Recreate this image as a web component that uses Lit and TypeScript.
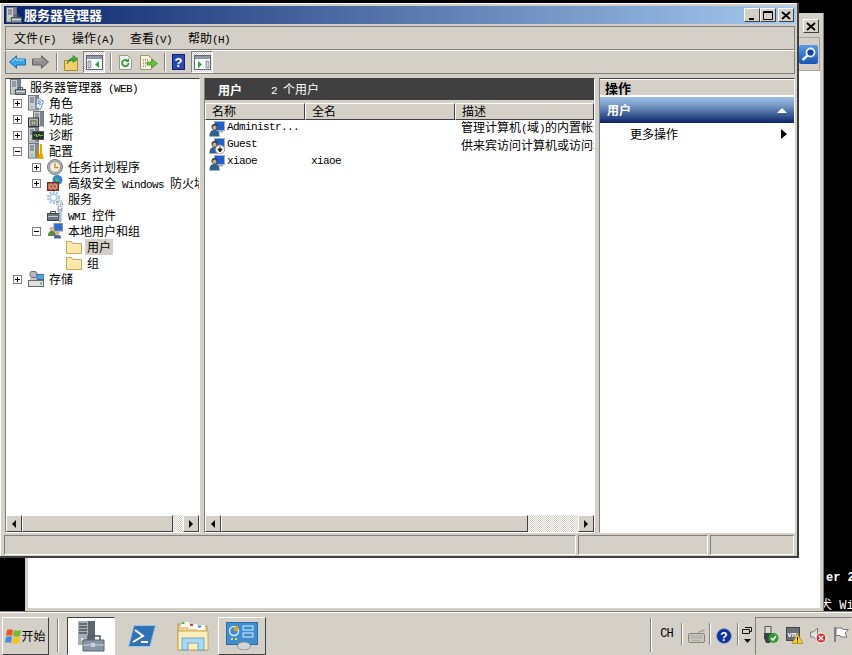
import { LitElement, css, html, svg, TemplateResult } from "lit";
import { customElement } from "lit/decorators.js";

// small helper so every icon below is one line of shapes
const ic = (w: number, h: number, body: unknown, vb = `0 0 ${w} ${h}`) =>
  html`<svg class="ic" width=${w} height=${h} viewBox=${vb}>${body}</svg>`;

const tower = svg`
  <rect x="0.500" y="0.500" width="10" height="14.500" fill="#c9ced4" stroke="#6f7780"/>
  <rect x="7" y="1" width="3" height="13.500" fill="#7d858e"/>
  <path d="M2 3h4M2 5h4M2 7h4" stroke="#5d656e"/>
  <rect x="3" y="11" width="2" height="2" fill="#8fd06a"/>`;

const toolbox = svg`
  <rect x="5.500" y="10.500" width="10" height="5" fill="#8b98a6" stroke="#4a5560"/>
  <path d="M8.500 10.500V8.500h4v2" fill="none" stroke="#4a5560"/>
  <path d="M6 12.500h9" stroke="#d7dde3"/>`;

const person = svg`
  <circle cx="5.500" cy="6" r="3" fill="#2f3a3c"/>
  <circle cx="5.500" cy="6.700" r="2.100" fill="#d6a67c"/>
  <path d="M.5 15.500c0-4.500 1.500-6.500 5-6.500s5 2 5 6.500z" fill="#33618f"/>`;

const icons: Record<string, () => TemplateResult> = {
  root: () => ic(16, 16, svg`${tower}${toolbox}`),
  roles: () =>
    ic(16, 16, svg`${tower}
      <path d="M9 3l6.500 3-3 8.500-4.500-2z" fill="#dfe9f5" stroke="#7a95b8"/>
      <path d="M10 6l3 1.500M9.500 8l3 1.500" stroke="#4f78ad"/>`),
  features: () =>
    ic(16, 16, svg`<g transform="translate(5 0)">${tower}</g>
      <rect x=".5" y="7" width="10" height="8.500" fill="#b9b9a8" stroke="#333"/>
      <rect x="3" y="10" width="5" height="4" fill="#e8e8e0" stroke="#444"/>
      <circle cx="5.500" cy="12" r="1" fill="#4c8a3c"/>`),
  diag: () =>
    ic(16, 16, svg`${tower}
      <rect x="4.500" y="4.500" width="11.500" height="8" fill="#26302a" stroke="#555"/>
      <path d="M6 9l2-2 1 3 2-3 1 2 3-1" fill="none" stroke="#7fd05a"/>`),
  config: () =>
    ic(16, 16, svg`${tower}
      <path d="M13 1v8M13 9l-1.500 6h3z" stroke="#e0a800" stroke-width="2" fill="#e0a800"/>
      <path d="M8.500 1l2.500 3-1 1-2.500-3z" fill="#8a8f96"/>
      <rect x="9" y="5" width="2" height="10" fill="#d08c00"/>`),
  clock: () =>
    ic(16, 16, svg`
      <circle cx="8" cy="8" r="7.500" fill="#b7bcc2" stroke="#6f767d"/>
      <circle cx="8" cy="8" r="5.500" fill="#f6f1dc" stroke="#8b8f94"/>
      <path d="M8 4v4.500h3.500" fill="none" stroke="#c88a20" stroke-width="1.300"/>`),
  firewall: () =>
    ic(16, 16, svg`
      <circle cx="10.500" cy="5" r="5" fill="#2f7fd6"/>
      <path d="M8 2.500l3 .5 1 2.500-3 1.500zM13 7l2-1-1 3z" fill="#5cb84a"/>
      <rect x="0.500" y="7.500" width="11" height="8" fill="#a8452a" stroke="#6e2a18"/>
      <path d="M1 10h10M1 13h10M4 8v2M8 8v2M2.500 10v3M6 10v3M9.500 10v3M4 13v2M8 13v2" stroke="#e3c0ac" stroke-width=".8"/>`),
  gears: () =>
    ic(16, 16, svg`
      <circle cx="6.500" cy="6.500" r="5.500" fill="none" stroke="#9dbcdc" stroke-width="2" stroke-dasharray="2 1.500"/>
      <circle cx="6.500" cy="6.500" r="3.500" fill="#fff" stroke="#b4cce4" stroke-width="1.800"/>
      <circle cx="12.500" cy="12.500" r="3" fill="none" stroke="#8f99a4" stroke-width="1.200" stroke-dasharray="1.500 1"/>
      <circle cx="12.500" cy="12.500" r="1.500" fill="#fff" stroke="#a8b2bc"/>`),
  wmi: () =>
    ic(16, 16, svg`
      <rect x="0.500" y="6.500" width="11" height="7" fill="#6d7680" stroke="#3c434a"/>
      <path d="M3.500 6.500V4.500h5v2" fill="none" stroke="#3c434a"/>
      <path d="M1 9.500h10" stroke="#c4cbd2"/>
      <path d="M11 .5l2 3 2-3v4l-1 1v8l-1 2-1-2v-8l-1-1z" fill="#c8d2de" stroke="#6c87a8" stroke-width=".7"/>`),
  localusers: () =>
    ic(16, 16, svg`
      <rect x="7" y="0.500" width="8.500" height="7.500" fill="#2d6fd0" stroke="#8c9098"/>
      <circle cx="5" cy="6" r="2.400" fill="#e2b48c"/>
      <path d="M1 13c0-4 1.500-5 4-5s4 1 4 5z" fill="#5d8a4c"/>
      <circle cx="10.500" cy="10" r="2" fill="#d9a97f"/>
      <path d="M7 15.500c0-3 1-3.500 3.500-3.500s3.500.5 3.500 3.500z" fill="#44689e"/>`),
  folder: () =>
    ic(16, 14, svg`
      <path d="M0.500 13.500V1.500h5l1 2h9v10z" fill="#fbe7a6" stroke="#c9a956"/>
      <path d="M1.500 5h13" stroke="#fff6d4"/>`),
  storage: () =>
    ic(16, 16, svg`
      <rect x="2" y="0.500" width="7" height="6" rx="2" fill="#b4bac0" stroke="#6a7077"/>
      <rect x="9" y="3.500" width="7" height="5" fill="#5ba3dc" stroke="#2e6aa0"/>
      <rect x="0.500" y="9.500" width="15" height="6" fill="#dfe2e5" stroke="#646a70"/>
      <rect x="12" y="11.500" width="2" height="2" fill="#5dbb3f"/>
      <path d="M2 8h8" stroke="#8a9097"/>`),
  user: () =>
    ic(16, 16, svg`
      <rect x="5.500" y="0.500" width="10" height="9" fill="#1f5fd0" stroke="#a4adb8"/>
      <path d="M9 10h5v1.500H9z" fill="#a4adb8"/>
      ${person}`),
  guest: () =>
    ic(16, 16, svg`
      <rect x="5.500" y="0.500" width="10" height="9" fill="#1f5fd0" stroke="#a4adb8"/>
      ${person}
      <circle cx="11" cy="11.500" r="4.500" fill="#fff" stroke="#8a8f94"/>
      <path d="M11 8.500v3M8.800 11h4.400L11 14z" stroke="#222" fill="#222"/>`),
  back: () =>
    ic(17, 14, svg`
      <path d="M0.500 7L7.500.8V4h9v6h-9v3.200z" fill="#39a3ea" stroke="#1c6fb8"/>
      <path d="M3 7l4-3.500V5h8" fill="none" stroke="#a5dcfa"/>`),
  forward: () =>
    ic(17, 14, svg`
      <path d="M16.500 7L9.500.8V4h-9v6h9v3.200z" fill="#8e8e8e" stroke="#5e5e5e"/>
      <path d="M1.500 5h8V3.500" fill="none" stroke="#bdbdbd"/>`),
  upfolder: () =>
    ic(15, 17, svg`
      <path d="M.5 16.500V6.500h13v10z" fill="#f0cf70" stroke="#a98a35"/>
      <path d="M3 10c1-4 3-6 6-6V1.500L14 5l-5 3.500V6c-2 0-4 1-6 4z" fill="#3fae3a" stroke="#23781f" stroke-width=".6"/>`),
  showtree: () =>
    ic(17, 15, svg`
      <rect x=".5" y=".5" width="16" height="14" fill="#fff" stroke="#667"/>
      <rect x="1" y="1" width="15" height="3" fill="#8a98a8"/>
      <path d="M2 6h3v7H2z" fill="#c3d2e2" stroke="#667" stroke-width=".6"/>
      <path d="M13 6l-4 3.500 4 3.500z" fill="#2fa03a"/>`),
  refresh: () =>
    ic(13, 15, svg`
      <path d="M.5.5h8l4 4v10H.5z" fill="#f4f4ee" stroke="#9a9a8e"/>
      <path d="M9.500 8a3.200 3.200 0 1 1-1-2.300" fill="none" stroke="#2fa03a" stroke-width="1.800"/>
      <path d="M10 3v4H6.500z" fill="#2fa03a"/>`),
  exportl: () =>
    ic(18, 15, svg`
      <path d="M.5.5h8l3 3v11H.5z" fill="#f7f2d8" stroke="#9c9474"/>
      <path d="M3 5h5M3 8h3M3 11h3" stroke="#555" stroke-dasharray="1 1"/>
      <path d="M7 7h5V4l5.500 4.500L12 13v-3H7z" fill="#62c03c" stroke="#3b8a22" stroke-width=".6"/>`),
  help: () =>
    ic(13, 16, svg`
      <rect x=".5" y=".5" width="12" height="15" fill="#2848b8" stroke="#12236e"/>
      <text x="6.500" y="13" font-family="Liberation Sans" font-weight="700" font-size="13" fill="#fff" text-anchor="middle">?</text>`),
  showaction: () =>
    ic(17, 15, svg`
      <rect x=".5" y=".5" width="16" height="14" fill="#fff" stroke="#667"/>
      <rect x="1" y="1" width="15" height="3" fill="#8a98a8"/>
      <path d="M12 6h3v7h-3z" fill="#c3d2e2" stroke="#667" stroke-width=".6"/>
      <path d="M4 6l4 3.500L4 13z" fill="#2fa03a"/>`),
  winlogo: () =>
    ic(16, 15, svg`
      <path d="M2 1c2-1 4-1 6 0L7 7C5 6 3 6 1 7z" fill="#e8562a"/>
      <path d="M9 1c2 1 4 1 7 0l-1 6c-2 1-5 1-7 0z" fill="#7cb83a"/>
      <path d="M1 8c2-1 4-1 6 0l-1 6c-2-1-4-1-6 0z" fill="#3f8fdc"/>
      <path d="M8 8c2 1 5 1 7 0l-1 6c-3 1-5 1-7 0z" fill="#f6c21c"/>`),
  bigserver: () =>
    ic(28, 32, svg`
      <rect x="1" y="1" width="14" height="24" fill="#a8aeb5"/>
      <rect x="11" y="1" width="7" height="24" fill="#5f666e"/>
      <path d="M2 4h8M2 7h8M2 10h8M2 13h8" stroke="#4e555c" stroke-width="1.300"/>
      <rect x="4" y="18" width="3" height="3" fill="#d8dde2"/>
      <path d="M6 20h21v11H6z" fill="#8696a6" stroke="#59656f"/>
      <path d="M11 20v-4h12v4" fill="none" stroke="#4f5a64" stroke-width="1.500"/>
      <path d="M6 25h21" stroke="#d0d7de"/>
      <rect x="14" y="23" width="4" height="4" fill="#c8d0d8"/>`),
  ps: () =>
    ic(28, 22, svg`
      <path d="M6 .5h21.500L22 21.500H.5z" fill="#2f73b6" stroke="#9cc4e4"/>
      <path d="M7 5l8 6-10 6" fill="none" stroke="#fff" stroke-width="2"/>
      <path d="M13 17h7" stroke="#fff" stroke-width="2"/>`),
  explorer: () =>
    ic(32, 30, svg`
      <path d="M1 29V3h11l2 2h16v24z" fill="#ead08c" stroke="#b09550"/>
      <rect x="4" y="1" width="8" height="5" fill="#fff"/><rect x="4.500" y="1" width="3" height="2" fill="#3ec43e"/>
      <rect x="12" y="3" width="8" height="5" fill="#fff"/><rect x="13" y="3" width="3" height="2" fill="#d8402a"/>
      <rect x="20" y="4" width="8" height="5" fill="#fff"/><rect x="21" y="4.500" width="3" height="2" fill="#2f86d8"/>
      <path d="M1 29V10h30v19z" fill="#fbeeb8" stroke="#c4a860"/>
      <path d="M5 29V17h22v12h-6V22H11v7z" fill="#a8d8f4" stroke="#6aa8d0"/>`),
  dash: () =>
    ic(32, 28, svg`
      <rect x=".5" y=".5" width="31" height="22" fill="#3f8fd0" stroke="#2a6aa4"/>
      <circle cx="8" cy="9" r="4.500" fill="none" stroke="#d8ecfa" stroke-width="1.400"/>
      <path d="M8 5l4-1v5H8z" fill="#f09a20"/>
      <rect x="17" y="4" width="10" height="4" fill="none" stroke="#d8ecfa"/>
      <rect x="17" y="11" width="10" height="4" fill="none" stroke="#d8ecfa"/>
      <path d="M5 16h2v2H5zM9 16h2v2H9z" fill="#f6d24a"/>
      <ellipse cx="18" cy="24" rx="6.500" ry="4" fill="#d4d6d8" stroke="#8c9096"/>`),
  keyboard: () =>
    ic(17, 14, svg`
      <path d="M11 4c0-2 1-2 3-2s2-1 2-2" fill="none" stroke="#8a8a84"/>
      <rect x=".5" y="4.500" width="16" height="9" rx="1.500" fill="#c9c6bc" stroke="#85847d"/>
      <path d="M2.500 7h12M2.500 9h12M4.500 11.500h8" stroke="#8e8d86" stroke-dasharray="1 1"/>`),
  helpround: () =>
    ic(16, 16, svg`
      <circle cx="8" cy="8" r="7.500" fill="#10309c" stroke="#9aa6c4"/>
      <text x="8" y="12.500" font-family="Liberation Sans" font-weight="700" font-size="12" fill="#fff" text-anchor="middle">?</text>`),
  restore: () =>
    ic(10, 7, svg`<path d="M3 .5h6.500v4H7.500M.5 2.500h7v4h-7z" fill="#d4d0c8" stroke="#111"/>`),
  smalldown: () => ic(7, 4, svg`<path d="M0 0h7L3.500 4z" fill="#111"/>`),
  usb: () =>
    ic(17, 18, svg`
      <rect x="3" y="0.500" width="6" height="7" fill="#d8d8d0" stroke="#555"/>
      <path d="M2 7h8v5l-2 5H4l-2-5z" fill="#3c4248"/>
      <circle cx="11.500" cy="12" r="5" fill="#2f9a2f"/>
      <path d="M9 12l2 2 3-4" fill="none" stroke="#fff" stroke-width="1.500"/>`),
  vm: () =>
    ic(17, 17, svg`
      <rect x=".5" y=".5" width="13" height="13" fill="#6b7076" stroke="#3f4347"/>
      <text x="7" y="9.500" font-family="Liberation Sans" font-weight="700" font-size="7.500" fill="#fff" text-anchor="middle">vm</text>
      <path d="M11.500 6.500l5.500 10H6z" fill="#f6cf2e" stroke="#8c7410" stroke-width=".6"/>
      <path d="M11.500 10v3.500M11.500 14.500v1" stroke="#111"/>`),
  speaker: () =>
    ic(17, 17, svg`
      <path d="M.5 5h3l4-4v13l-4-4h-3z" fill="#e4e4de" stroke="#77777a"/>
      <circle cx="11" cy="11" r="5" fill="#d62a2a" stroke="#fff"/>
      <path d="M8.800 8.800l4.400 4.400M13.200 8.800l-4.400 4.400" stroke="#fff" stroke-width="1.400"/>`),
  flag: () =>
    ic(15, 17, svg`
      <path d="M1 0v15" stroke="#68686a" stroke-width="1.500"/>
      <path d="M2 1h6l1 1.500h5.500L11 6l2 4H7L6 8.500H2z" fill="#fdfdfb" stroke="#77777a"/>`),
};

interface TreeRow {
  level: number;
  exp?: "+" | "-";
  icon: string;
  label: unknown;
  selected?: boolean;
}

const l = (s: string) => html`<span class="l">${s}</span>`;

const treeRows: TreeRow[] = [
  { level: 0, icon: "root", label: html`服务器管理器${l(" (WEB)")}` },
  { level: 1, exp: "+", icon: "roles", label: "角色" },
  { level: 1, exp: "+", icon: "features", label: "功能" },
  { level: 1, exp: "+", icon: "diag", label: "诊断" },
  { level: 1, exp: "-", icon: "config", label: "配置" },
  { level: 2, exp: "+", icon: "clock", label: "任务计划程序" },
  { level: 2, exp: "+", icon: "firewall", label: html`高级安全${l(" Windows ")}防火墙` },
  { level: 2, icon: "gears", label: "服务" },
  { level: 2, icon: "wmi", label: html`${l("WMI ")}控件` },
  { level: 2, exp: "-", icon: "localusers", label: "本地用户和组" },
  { level: 3, icon: "folder", label: "用户", selected: true },
  { level: 3, icon: "folder", label: "组" },
  { level: 1, exp: "+", icon: "storage", label: "存储" },
];

const users = [
  { icon: "user", name: "Administr...", full: "", desc: html`管理计算机${l("(")}域${l(")")}的内置帐户` },
  { icon: "guest", name: "Guest", full: "", desc: "供来宾访问计算机或访问域的内置帐户" },
  { icon: "user", name: "xiaoe", full: "xiaoe", desc: "" },
];

@customElement("app-root")
export class AppRoot extends LitElement {
  static styles = css`
    * {
      box-sizing: border-box;
    }

    :host {
      display: block;
      position: relative;
      width: 852px;
      height: 655px;
      overflow: hidden;
      background: #000;
      color: #000;
      font-family: "Noto Sans CJK SC", "Liberation Sans", sans-serif;
      font-size: 12px;
      line-height: 14px;
    }

    .ic {
      display: block;
      flex: none;
    }

    .l {
      font-family: "Liberation Mono", "Noto Sans CJK SC", monospace;
      font-size: 11px;
      letter-spacing: -0.6px;
      line-height: 1;
      white-space: pre;
    }

    .console {
      position: absolute;
      left: 820px;
      top: 564px;
      width: 32px;
      overflow: hidden;
      color: #fff;
      font-family: "Liberation Mono", "Noto Sans CJK SC", monospace;
      font-size: 12px;
      line-height: 28px;
      white-space: pre;
    }

    .console b {
      display: block;
      margin-left: 6px;
    }

    .console span {
      display: block;
    }

    .backwin {
      position: absolute;
      left: 25px;
      top: 13px;
      width: 799px;
      height: 598px;
      display: flex;
      flex-direction: column;
      padding: 6px 3px 3px;
      background: #d4d0c8;
      border-right: 1px solid #808080;
    }

    .backtitle {
      display: flex;
      justify-content: flex-end;
      height: 18px;
      padding-right: 1px;
    }

    .backband {
      display: flex;
      justify-content: flex-end;
      align-items: flex-start;
      height: 34px;
      padding: 7px 0 0;
      border: 1px solid #a8a59e;
    }

    .search {
      width: 19px;
      height: 19px;
      margin-right: 1px;
      border-radius: 2px;
      background: linear-gradient(#5b9be6, #1a55b4);
    }

    .backbody {
      flex: 1;
      background: #fff;
    }

    .mainwin {
      position: absolute;
      left: 0;
      top: 3px;
      width: 799px;
      height: 555px;
      display: flex;
      flex-direction: column;
      padding: 3px 1px 1px 4px;
      background: #d4d0c8;
      border-right: 2px solid #404040;
      border-bottom: 2px solid #404040;
      box-shadow: inset 1px 1px #fff;
    }

    .title {
      display: flex;
      align-items: center;
      flex: none;
      height: 18px;
      padding: 0 2px;
      background: linear-gradient(90deg, #0a246a, #a6caf0);
      color: #fff;
      font-size: 13px;
      font-weight: 700;
    }

    .title .name {
      flex: 1;
      margin-left: 2px;
    }

    .capbtn {
      display: flex;
      align-items: center;
      justify-content: center;
      width: 16px;
      height: 14px;
      background: #d4d0c8;
      border: 1px solid;
      border-color: #fff #404040 #404040 #fff;
    }

    .capbtn.close {
      margin-left: 2px;
    }

    .band {
      display: flex;
      align-items: center;
      flex: none;
      margin: 0 1px;
      height: 24px;
      border: 1px solid #808080;
      border-top-color: #fff;
    }

    .menu {
      margin-top: 2px;
      padding-left: 8px;
      gap: 16px;
      border-top-color: #808080;
    }

    .tools {
      padding-left: 3px;
    }

    .tool {
      display: flex;
      justify-content: center;
      align-items: center;
      flex: none;
    }

    .tool.on {
      width: 22px;
      height: 22px;
      background: repeating-conic-gradient(#fff 0 25%, #d4d0c8 0 50%) 0 0 / 2px 2px;
      border: 1px solid;
      border-color: #808080 #fff #fff #808080;
    }

    .sep {
      width: 2px;
      height: 18px;
      flex: none;
      background: linear-gradient(90deg, #808080 50%, #fff 50%);
    }

    .panes {
      display: flex;
      flex: 1;
      min-height: 0;
      gap: 4px;
      margin: 4px 1px 0;
    }

    .pane {
      display: flex;
      flex-direction: column;
      min-width: 0;
      border: 1px solid;
      border-color: #404040 #fff #fff #808080;
    }

    .pane.tree {
      width: 195px;
    }

    .pane.mid {
      width: 391px;
    }

    .pane.act {
      width: 196px;
      background: #fff;
    }

    .treebody {
      flex: 1;
      min-height: 0;
      overflow: hidden;
      background: #fff;
    }

    .row {
      display: flex;
      align-items: center;
      height: 16px;
      white-space: nowrap;
    }

    .exp {
      flex: none;
      display: flex;
      align-items: center;
      justify-content: center;
      width: 9px;
      height: 9px;
      margin-right: 6px;
      border: 1px solid #808080;
      background: #fff;
      position: relative;
    }

    .exp.none {
      border: none;
      background: none;
    }

    .exp i {
      width: 5px;
      height: 1px;
      background: #000;
    }

    .exp.plus i + i {
      position: absolute;
      width: 1px;
      height: 5px;
    }

    .row .text {
      margin-left: 5px;
      height: 16px;
      line-height: 15px;
    }

    .row.lv0 {
      padding-left: 4px;
    }

    .row.lv0 .text {
      margin-left: 4px;
    }

    .row.lv1 {
      padding-left: 7px;
    }

    .row.lv2 {
      padding-left: 26px;
    }

    .row.lv3 {
      padding-left: 45px;
    }

    .row.lv3 .text {
      margin-left: 3px;
      padding: 0 2px;
    }

    .row .text.sel {
      background: #d4d0c8;
    }

    .sbar {
      display: flex;
      flex: none;
      height: 17px;
      background: repeating-conic-gradient(#fff 0 25%, #d4d0c8 0 50%) 0 0 / 2px 2px;
    }

    .sbtn {
      display: flex;
      align-items: center;
      justify-content: center;
      flex: none;
      width: 16px;
      background: #d4d0c8;
      border: 1px solid;
      border-color: #fff #404040 #404040 #fff;
    }

    .thumb {
      background: #d4d0c8;
      border: 1px solid;
      border-color: #fff #404040 #404040 #fff;
    }

    .tl,
    .tr {
      width: 0;
      height: 0;
      border-top: 4px solid transparent;
      border-bottom: 4px solid transparent;
    }

    .tl {
      border-right: 4px solid #000;
    }

    .tr {
      border-left: 4px solid #000;
    }

    .sfill {
      flex: 1;
    }

    .midhead {
      display: flex;
      align-items: center;
      flex: none;
      height: 21px;
      padding-left: 13px;
      background: #404040;
      color: #fff;
    }

    .midhead b {
      width: 53px;
    }

    .midbody {
      flex: 1;
      min-height: 0;
      overflow: hidden;
      background: #fff;
      border-top: 3px solid #d4d0c8;
    }

    .grid {
      display: grid;
      grid-template-columns: 100px 150px 1fr;
    }

    .col {
      height: 17px;
      padding-left: 6px;
      background: #d4d0c8;
      border: 1px solid;
      border-color: #fff #404040 #404040 #fff;
      line-height: 13px;
      white-space: nowrap;
      overflow: hidden;
    }

    .cell {
      display: flex;
      align-items: center;
      height: 17px;
      padding-left: 6px;
      white-space: nowrap;
      overflow: hidden;
    }

    .cell > span {
      margin-bottom: 2px;
    }

    .cell.first {
      padding-left: 4px;
      gap: 2px;
    }

    .acthead {
      flex: none;
      height: 16px;
      padding-left: 5px;
      background: #d4d0c8;
      border-top: 1px solid #fff;
      font-size: 13px;
      font-weight: 700;
      line-height: 15px;
    }

    .actbar {
      display: flex;
      align-items: center;
      justify-content: space-between;
      flex: none;
      height: 26px;
      margin-top: 2px;
      padding: 0 7px;
      background: linear-gradient(#9dc0e8, #7b9dc8 30%, #0a246a);
      color: #fff;
      font-weight: 700;
    }

    .up {
      width: 0;
      height: 0;
      border-left: 5px solid transparent;
      border-right: 5px solid transparent;
      border-bottom: 5px solid #fff;
    }

    .actitem {
      display: flex;
      align-items: center;
      justify-content: space-between;
      height: 22px;
      padding: 0 7px 0 30px;
    }

    .actitem .tr {
      border-top-width: 5px;
      border-bottom-width: 5px;
      border-left-width: 6px;
    }

    .status {
      display: flex;
      flex: none;
      gap: 2px;
      height: 20px;
      margin: 2px 2px 0 0;
    }

    .status div {
      border: 1px solid;
      border-color: #808080 #fff #fff #808080;
    }

    .taskbar {
      position: absolute;
      left: 0;
      right: 0;
      top: 611px;
      bottom: 0;
      display: flex;
      align-items: flex-end;
      background: #d4d0c8;
      border-top: 1px solid #808080;
      box-shadow: inset 0 1px #fff;
    }

    .tbtn {
      display: flex;
      align-items: center;
      justify-content: center;
      flex: none;
      height: 38px;
      background: #d4d0c8;
      border: 1px solid;
      border-color: #fff #404040 #404040 #fff;
    }

    .start {
      width: 47px;
      margin-left: 2px;
    }

    .tsep {
      flex: none;
      width: 2px;
      margin-bottom: 3px;
      background: linear-gradient(90deg, #808080 50%, #fff 50%);
    }

    .tsep.big {
      height: 34px;
    }

    .tsep.small {
      height: 22px;
      margin-bottom: 10px;
    }

    .tbtn.active {
      width: 48px;
      margin-left: 8px;
      background: #fff;
      border-color: #404040 #fff #fff #404040;
    }

    .tplain {
      display: flex;
      align-items: center;
      justify-content: center;
      flex: none;
      height: 38px;
    }

    .spacer {
      flex: 1;
    }

    .ch {
      flex: none;
      width: 29px;
      padding-bottom: 14px;
      text-align: center;
      font-family: "Liberation Mono", monospace;
      font-size: 12px;
      letter-spacing: -1px;
      line-height: 14px;
    }

    .lang {
      display: flex;
      flex-direction: column;
      align-items: center;
      justify-content: center;
      gap: 5px;
      flex: none;
      width: 16px;
      height: 38px;
      padding-bottom: 2px;
    }

    .tray {
      display: flex;
      align-items: center;
      gap: 7px;
      flex: none;
      width: 97px;
      height: 38px;
      padding: 0 0 2px 6px;
      border: 1px solid;
      border-color: #808080 transparent transparent #808080;
    }
  `;

  private scrollbar(thumb: number) {
    return html`<div class="sbar">
      <div class="sbtn"><span class="tl"></span></div>
      <div class="thumb" style="width:${thumb}px"></div>
      <div class="sfill"></div>
      <div class="sbtn"><span class="tr"></span></div>
    </div>`;
  }

  private renderTree() {
    return treeRows.map(
      (r) => html`<div class="row lv${r.level}">
        ${r.level > 0
          ? html`<span class="exp ${r.exp === "+" ? "plus" : r.exp ? "" : "none"}">
              ${r.exp ? html`<i></i>` : ""}${r.exp === "+" ? html`<i></i>` : ""}
            </span>`
          : ""}
        ${icons[r.icon]()}
        <span class="text ${r.selected ? "sel" : ""}">${r.label}</span>
      </div>`
    );
  }

  render() {
    return html`
      <div class="console"><b>er 2</b><span>犬 Win</span></div>

      <div class="backwin">
        <div class="backtitle">
          <div class="capbtn">
            <svg width="10" height="9" viewBox="0 0 10 9"><path d="M1 1l8 7M9 1L1 8" stroke="#000" stroke-width="1.700" /></svg>
          </div>
        </div>
        <div class="backband">
          <div class="search">
            <svg width="19" height="19" viewBox="0 0 19 19">
              <circle cx="11.500" cy="7.500" r="4" fill="#1a3fa8" stroke="#e8f0fa" stroke-width="1.800" />
              <path d="M8.500 10.500L3.500 15" stroke="#e8f0fa" stroke-width="2.400" />
            </svg>
          </div>
        </div>
        <div class="backbody"></div>
      </div>

      <div class="mainwin">
        <div class="title">
          ${icons.root()}
          <span class="name">服务器管理器</span>
          <div class="capbtn">
            <svg width="10" height="9" viewBox="0 0 10 9"><path d="M2 7h5v2H2z" fill="#000" /></svg>
          </div>
          <div class="capbtn">
            <svg width="10" height="9" viewBox="0 0 10 9"><path d="M.5 1.500h9v7h-9zM.5.500h9v1h-9z" fill="none" stroke="#000" /></svg>
          </div>
          <div class="capbtn close">
            <svg width="10" height="9" viewBox="0 0 10 9"><path d="M1 1l8 7M9 1L1 8" stroke="#000" stroke-width="1.700" /></svg>
          </div>
        </div>

        <div class="band menu">
          <span>文件${l("(F)")}</span>
          <span>操作${l("(A)")}</span>
          <span>查看${l("(V)")}</span>
          <span>帮助${l("(H)")}</span>
        </div>

        <div class="band tools">
          <div class="tool" style="width:17px">${icons.back()}</div>
          <div class="tool" style="width:17px;margin-left:6px">${icons.forward()}</div>
          <div class="sep" style="margin:0 6px 0 7px"></div>
          <div class="tool" style="width:15px">${icons.upfolder()}</div>
          <div class="tool on" style="margin-left:4px">${icons.showtree()}</div>
          <div class="sep" style="margin:0 7px 0 5px"></div>
          <div class="tool" style="width:13px">${icons.refresh()}</div>
          <div class="tool" style="width:18px;margin-left:8px">${icons.exportl()}</div>
          <div class="sep" style="margin:0 6px"></div>
          <div class="tool" style="width:13px">${icons.help()}</div>
          <div class="tool on" style="margin-left:6px">${icons.showaction()}</div>
        </div>

        <div class="panes">
          <div class="pane tree">
            <div class="treebody">${this.renderTree()}</div>
            ${this.scrollbar(151)}
          </div>

          <div class="pane mid">
            <div class="midhead">
              <b>用户</b>
              <span>${l("2 ")}个用户</span>
            </div>
            <div class="midbody">
              <div class="grid">
                <div class="col">名称</div>
                <div class="col">全名</div>
                <div class="col">描述</div>
                ${users.map(
                  (u) => html`
                    <div class="cell first">${icons[u.icon]()}${l(u.name)}</div>
                    <div class="cell">${l(u.full)}</div>
                    <div class="cell"><span>${u.desc}</span></div>
                  `
                )}
              </div>
            </div>
            ${this.scrollbar(307)}
          </div>

          <div class="pane act">
            <div class="acthead">操作</div>
            <div class="actbar"><span>用户</span><span class="up"></span></div>
            <div class="actitem"><span>更多操作</span><span class="tr"></span></div>
          </div>
        </div>

        <div class="status">
          <div style="width:572px"></div>
          <div style="width:130px"></div>
          <div style="flex:1"></div>
        </div>
      </div>

      <div class="taskbar">
        <div class="tbtn start">${icons.winlogo()}<span>开始</span></div>
        <div class="tsep big" style="margin-left:8px"></div>
        <div class="tbtn active">${icons.bigserver()}</div>
        <div class="tplain" style="width:54px">${icons.ps()}</div>
        <div class="tplain" style="width:48px">${icons.explorer()}</div>
        <div class="tbtn" style="width:48px;margin-left:1px">${icons.dash()}</div>
        <div class="spacer"></div>
        <div class="tsep big"></div>
        <div class="ch">CH</div>
        <div class="tsep small"></div>
        <div class="tplain" style="width:26px">${icons.keyboard()}</div>
        <div class="tsep small"></div>
        <div class="tplain" style="width:26px">${icons.helpround()}</div>
        <div class="tsep small"></div>
        <div class="lang">${icons.restore()}${icons.smalldown()}</div>
        <div class="tray">${icons.usb()}${icons.vm()}${icons.speaker()}${icons.flag()}</div>
      </div>
    `;
  }
}
